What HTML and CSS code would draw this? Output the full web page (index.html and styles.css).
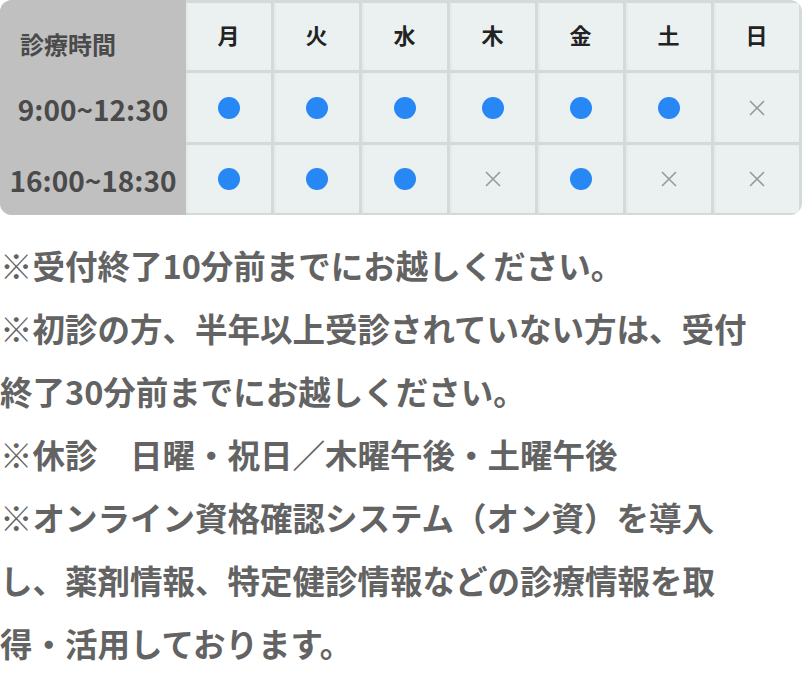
FILE: index.html
```html
<!DOCTYPE html>
<html lang="ja">
<head>
    <meta charset="utf-8">
    <title>診療時間</title>
    <link rel="stylesheet" href="styles.css">
</head>
<body>
    <div class="schedule">
        <div class="label-col">
            <div class="label head">診療時間</div>
            <div class="label">9:00~12:30</div>
            <div class="label">16:00~18:30</div>
        </div>
        <div class="days">
            <div class="cell day">月</div>
            <div class="cell day">火</div>
            <div class="cell day">水</div>
            <div class="cell day">木</div>
            <div class="cell day">金</div>
            <div class="cell day">土</div>
            <div class="cell day">日</div>

            <div class="cell"><span class="dot"></span></div>
            <div class="cell"><span class="dot"></span></div>
            <div class="cell"><span class="dot"></span></div>
            <div class="cell"><span class="dot"></span></div>
            <div class="cell"><span class="dot"></span></div>
            <div class="cell"><span class="dot"></span></div>
            <div class="cell"><svg class="cross" viewBox="0 0 16 16"><path d="M1 1L15 15M15 1L1 15"/></svg></div>

            <div class="cell"><span class="dot"></span></div>
            <div class="cell"><span class="dot"></span></div>
            <div class="cell"><span class="dot"></span></div>
            <div class="cell"><svg class="cross" viewBox="0 0 16 16"><path d="M1 1L15 15M15 1L1 15"/></svg></div>
            <div class="cell"><span class="dot"></span></div>
            <div class="cell"><svg class="cross" viewBox="0 0 16 16"><path d="M1 1L15 15M15 1L1 15"/></svg></div>
            <div class="cell"><svg class="cross" viewBox="0 0 16 16"><path d="M1 1L15 15M15 1L1 15"/></svg></div>
        </div>
    </div>

    <p class="notes">
        ※受付終了10分前までにお越しください。<br>
        ※初診の方、半年以上受診されていない方は、受付<br>
        終了30分前までにお越しください。<br>
        ※休診　日曜・祝日／木曜午後・土曜午後<br>
        ※オンライン資格確認システム（オン資）を導入<br>
        し、薬剤情報、特定健診情報などの診療情報を取<br>
        得・活用しております。
    </p>
</body>
</html>
```

FILE: styles.css
```css
body {
    margin: 0;
    background-color: #fff;
    font-family: 'Noto Sans CJK JP', 'Noto Sans', sans-serif;
}

.schedule {
    display: flex;
    width: 802px;
    height: 215px;
    border-radius: 12px;
    overflow: hidden;
    background-color: #d3dada;
}

.label-col {
    width: 186px;
    flex-shrink: 0;
    background-color: #c0c0c0;
    display: grid;
    grid-template-rows: 73px 72px 70px;
}

.label {
    display: flex;
    align-items: center;
    justify-content: center;
    font-size: 28px;
    font-weight: bold;
    color: #4a4a4a;
}

.label.head {
    justify-content: flex-start;
    padding: 14px 0 0 20px;
    font-size: 24px;
}

.days {
    flex: 1;
    display: grid;
    grid-template-columns: repeat(7, 1fr);
    grid-template-rows: 67px 69px 68px;
    gap: 3px;
    padding: 3px 3px 2px 0;
}

.cell {
    background-color: #ebf1f1;
    display: flex;
    align-items: center;
    justify-content: center;
    box-shadow: inset 2px 0 2px rgba(0, 0, 0, 0.03);
}

.day {
    padding-bottom: 5px;
    font-size: 22px;
    font-weight: bold;
    color: #222;
}

.dot {
    width: 22px;
    height: 22px;
    border-radius: 50%;
    background-color: #2787f5;
}

.cross {
    width: 16px;
    height: 16px;
    stroke: #9a9a9a;
    stroke-width: 1.6;
    fill: none;
}

.notes {
    margin: 18px 0 0 0;
    font-size: 32.5px;
    line-height: 63px;
    font-weight: bold;
    color: #636363;
}
```
